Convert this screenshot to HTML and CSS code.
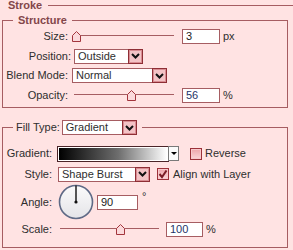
FILE: index.html
```html
<!DOCTYPE html>
<html>
<head>
<meta charset="utf-8">
<title>Layer Style - Stroke</title>
<link rel="stylesheet" href="styles.css">
</head>
<body>
<div class="panel">

  <div class="heading"><span>Stroke</span></div>

  <fieldset class="group structure">
    <legend class="group-title">Structure</legend>

    <div class="row row-size">
      <span class="lbl">Size:</span>
      <div class="slider" style="--pos:0px">
        <svg class="thumb" width="9" height="11" viewBox="0 0 9 11"><polygon points="0.5,10.5 0.5,4.5 4.5,0.5 8.5,4.5 8.5,10.5"/></svg>
      </div>
      <div class="field">3</div>
      <span class="unit">px</span>
    </div>

    <div class="row row-pos">
      <span class="lbl">Position:</span>
      <div class="select sel-position">
        <span>Outside</span>
        <span class="btn"><svg width="9" height="6" viewBox="0 0 9 6"><polyline points="1,1 4.5,4.5 8,1"/></svg></span>
      </div>
    </div>

    <div class="row row-blend">
      <span class="lbl">Blend Mode:</span>
      <div class="select sel-blend">
        <span>Normal</span>
        <span class="btn"><svg width="9" height="6" viewBox="0 0 9 6"><polyline points="1,1 4.5,4.5 8,1"/></svg></span>
      </div>
    </div>

    <div class="row row-opacity">
      <span class="lbl">Opacity:</span>
      <div class="slider" style="--pos:55px">
        <svg class="thumb" width="9" height="11" viewBox="0 0 9 11"><polygon points="0.5,10.5 0.5,4.5 4.5,0.5 8.5,4.5 8.5,10.5"/></svg>
      </div>
      <div class="field blue">56</div>
      <span class="unit">%</span>
    </div>
  </fieldset>

  <fieldset class="group fill">
    <legend class="fill-legend">
      <span>Fill Type:</span>
      <div class="select sel-fill">
        <span>Gradient</span>
        <span class="btn"><svg width="9" height="6" viewBox="0 0 9 6"><polyline points="1,1 4.5,4.5 8,1"/></svg></span>
      </div>
    </legend>

    <div class="row row-grad">
      <span class="lbl">Gradient:</span>
      <div class="gradient"><div class="ramp"></div></div>
      <span class="grad-btn"><i></i></span>
      <span class="check"></span>
      <span class="check-text">Reverse</span>
    </div>

    <div class="row row-style">
      <span class="lbl">Style:</span>
      <div class="select sel-style">
        <span>Shape Burst</span>
        <span class="btn"><svg width="9" height="6" viewBox="0 0 9 6"><polyline points="1,1 4.5,4.5 8,1"/></svg></span>
      </div>
      <span class="check checked"><svg width="10" height="10" viewBox="0 0 10 10"><polyline points="1.5,5 4,8 8.5,1.5"/></svg></span>
      <span class="check-text">Align with Layer</span>
    </div>

    <div class="row row-angle">
      <span class="lbl">Angle:</span>
      <svg class="dial" width="36" height="36" viewBox="0 0 36 36">
        <defs>
          <linearGradient id="dialFill" x1="0" y1="0" x2="0" y2="1">
            <stop offset="0" stop-color="#fbfbfb"/>
            <stop offset="1" stop-color="#e4e4e8"/>
          </linearGradient>
        </defs>
        <circle cx="18" cy="18" r="16.5" fill="url(#dialFill)" stroke="#5f6a86" stroke-width="1.6"/>
        <line x1="18" y1="18" x2="18" y2="1.5" stroke="#111" stroke-width="1.4"/>
        <circle cx="18" cy="18" r="1.6" fill="#111"/>
      </svg>
      <div class="field angle-field">90</div>
      <span class="degree">°</span>
    </div>

    <div class="row row-scale">
      <span class="lbl">Scale:</span>
      <div class="slider" style="--pos:58px">
        <svg class="thumb" width="9" height="11" viewBox="0 0 9 11"><polygon points="0.5,10.5 0.5,4.5 4.5,0.5 8.5,4.5 8.5,10.5"/></svg>
      </div>
      <div class="field blue">100</div>
      <span class="unit">%</span>
    </div>
  </fieldset>

</div>
</body>
</html>
```

FILE: styles.css
```css
* {
  box-sizing: border-box;
}

body {
  margin: 0;
  width: 293px;
  height: 250px;
  overflow: hidden;
  background-color: #ffe3e3;
  font-family: "Liberation Sans", Arial, sans-serif;
  font-size: 11px;
  line-height: 13px;
  color: #2e2e2e;
}

.panel {
  padding: 0 5px 0 2px;
}

/* top "Stroke" title with rule to the right */
.heading {
  display: flex;
  align-items: center;
  height: 11px;
  margin-left: 6px;
  margin-right: -5px;
}

.heading span {
  font-weight: bold;
  color: #83464a;
  margin-right: 6px;
}

.heading::after {
  content: "";
  flex: 1;
  border-top: 1px solid #a65d62;
}

/* group boxes */
.group {
  margin: 0;
  padding: 0;
  border: 1px solid #a65d62;
  min-width: 0;
}

.structure {
  margin-top: 3px;
  padding-bottom: 2px;
}

.fill {
  margin-top: 12px;
  padding-top: 8px;
  padding-bottom: 8px;
}

.group-title {
  margin-left: 10px;
  padding: 0 5px;
  font-weight: bold;
  color: #83464a;
  line-height: 13px;
}

.fill-legend {
  display: flex;
  align-items: center;
  margin-left: 10px;
  padding: 0 5px 0 3px;
  height: 15px;
}

.fill-legend > span {
  margin-right: 2px;
}

/* rows */
.row {
  display: flex;
  align-items: center;
}

.lbl {
  flex: none;
  text-align: right;
}

.structure .lbl {
  width: 65px;
  margin-right: 4px;
}

.fill .lbl {
  width: 49px;
  margin-right: 5px;
}

.row-size { height: 19px; }
.row-pos { height: 20px; }
.row-blend { height: 19px; }
.row-opacity { height: 20px; }

.row-grad { height: 21px; }
.row-style { height: 20px; }
.row-angle { height: 36px; }
.row-scale { height: 19px; }

.row-pos .lbl {
  width: 68px;
  margin-right: 3px;
}

/* slider */
.slider {
  position: relative;
  flex: none;
  width: 102px;
  height: 11px;
}

.slider::before {
  content: "";
  position: absolute;
  left: 2px;
  right: 0;
  top: 4px;
  border-top: 1px solid #a65d62;
}

.thumb {
  position: absolute;
  top: 0;
  left: var(--pos);
  display: block;
}

.thumb polygon {
  fill: #fbd9db;
  stroke: #a3353d;
  stroke-width: 1;
}

.row-scale .slider {
  width: 101px;
  margin-left: 1px;
}

/* text fields */
.field {
  flex: none;
  width: 38px;
  height: 15px;
  margin-left: 8px;
  padding-left: 3px;
  background: #fff;
  border: 1px solid #a65d62;
  color: #1a1a1a;
}

.field.blue {
  color: #1f3468;
}

.unit {
  margin-left: 3px;
}

.angle-field {
  width: 41px;
  margin-left: 3px;
}

.row-scale .field {
  width: 37px;
  margin-left: 7px;
}

.degree {
  align-self: flex-start;
  margin-top: 6px;
  margin-left: 4px;
}

/* dropdowns */
.select {
  display: flex;
  flex: none;
  height: 15px;
  background: #fff;
  border: 1px solid #a65d62;
}

.select > span:first-child {
  flex: 1;
  padding-left: 3px;
  white-space: nowrap;
}

.select .btn {
  display: flex;
  align-items: center;
  justify-content: center;
  width: 15px;
  margin: -1px -1px -1px 0;
  background: #f3c3c6;
  border: 1px solid #8e2e35;
  box-shadow: inset 0 0 0 1px #d98d93;
}

.select .btn polyline {
  fill: none;
  stroke: #111;
  stroke-width: 2;
}

.sel-position { width: 69px; }
.sel-blend { width: 95px; }
.sel-fill { width: 75px; }
.sel-style { width: 92px; margin-left: 1px; }

/* gradient picker */
.gradient {
  flex: none;
  width: 112px;
  height: 16px;
  padding: 1px;
  background: #fff;
  border: 1px solid #4b2428;
}

.ramp {
  height: 100%;
  background: linear-gradient(to right, #000, #6e6e6e 55%, #fff);
}

.grad-btn {
  display: flex;
  align-items: center;
  justify-content: center;
  flex: none;
  width: 11px;
  height: 15px;
  margin-left: -1px;
  background: #fbfbfb;
  border: 1px solid #7a7a7a;
}

.grad-btn i {
  border-left: 3px solid transparent;
  border-right: 3px solid transparent;
  border-top: 3px solid #000;
}

/* checkboxes */
.check {
  display: flex;
  align-items: center;
  justify-content: center;
  flex: none;
  width: 12px;
  height: 12px;
  border: 1px solid #9c3139;
  background: linear-gradient(#eea5aa, #fbd6d9);
  box-shadow: inset 0 0 0 1px #f8c9cc;
}

.check svg polyline {
  fill: none;
  stroke: #7a1d25;
  stroke-width: 2;
}

.row-grad .check {
  margin-left: 11px;
}

.row-style .check {
  margin-left: 7px;
}

.check-text {
  margin-left: 3px;
  white-space: nowrap;
}

.row-style .check-text {
  margin-left: 4px;
}

.dial {
  flex: none;
  display: block;
  margin-left: 1px;
}
```
